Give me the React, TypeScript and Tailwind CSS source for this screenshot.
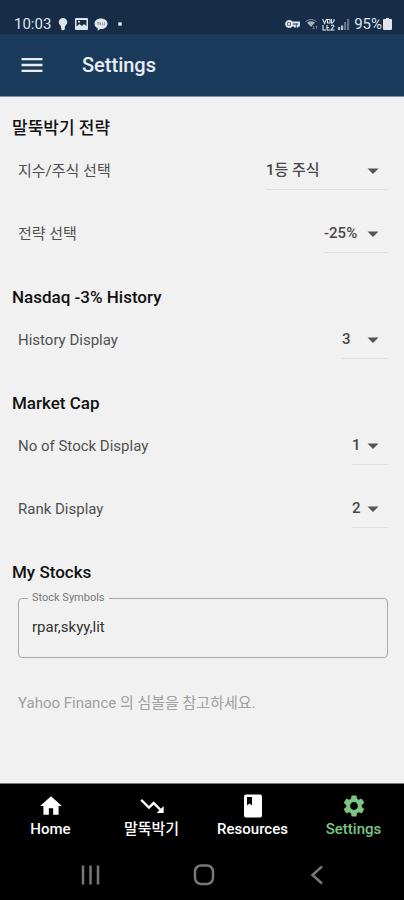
import React, { useState } from "react";
import { MdHome, MdMenu, MdSettings, MdTrendingDown } from "react-icons/md";

type SettingProps = {
  id: string;
  label: string;
  options: string[];
  initial: string;
  width: string;
};

const sections: { title: string; rows: SettingProps[] }[] = [
  {
    title: "말뚝박기 전략",
    rows: [
      {
        id: "target",
        label: "지수/주식 선택",
        options: ["1등 주식"],
        initial: "1등 주식",
        width: "w-[122px]",
      },
      {
        id: "strategy",
        label: "전략 선택",
        options: ["-25%"],
        initial: "-25%",
        width: "w-16",
      },
    ],
  },
  {
    title: "Nasdaq -3% History",
    rows: [
      {
        id: "history",
        label: "History Display",
        options: ["1", "2", "3"],
        initial: "3",
        width: "w-[46px]",
      },
    ],
  },
  {
    title: "Market Cap",
    rows: [
      {
        id: "stocks",
        label: "No of Stock Display",
        options: ["1", "2", "3"],
        initial: "1",
        width: "w-9",
      },
      {
        id: "rank",
        label: "Rank Display",
        options: ["1", "2", "3"],
        initial: "2",
        width: "w-9",
      },
    ],
  },
];

const BookIcon = () => (
  <svg viewBox="0 0 24 24" className="size-6" fill="currentColor">
    <path
      fillRule="evenodd"
      d="M5 0.5h14a2 2 0 0 1 2 2v19a2 2 0 0 1-2 2H5a2 2 0 0 1-2-2v-19a2 2 0 0 1 2-2zM6 3v8.5l2.5-2 2.5 2V3z"
    />
  </svg>
);

const tabs = [
  { name: "Home", icon: <MdHome size={26} />, active: false },
  { name: "말뚝박기", icon: <MdTrendingDown size={28} />, active: false },
  { name: "Resources", icon: <BookIcon />, active: false },
  { name: "Settings", icon: <MdSettings size={26} />, active: true },
];

const StatusBar = () => (
  <div className="flex h-[34px] items-end justify-between bg-[#162c47] px-3 pb-[2px] text-[#dfe5ec]">
    <div className="flex items-center">
      <span className="w-[38px] pl-[2px] text-[15px] leading-4">10:03</span>
      <svg viewBox="0 0 10 14" className="ml-2 h-[14px] w-[10px]" fill="currentColor">
        <path d="M5 1a4.300 4.300 0 0 1 4.300 4.300C9.300 7.300 7 8.500 6.800 10.500V12a1.800 1.300 0 0 1-3.600 0v-1.500C3 8.500.7 7.300.7 5.300A4.300 4.300 0 0 1 5 1z" />
      </svg>
      <svg viewBox="0 0 13 12" className="ml-[7px] h-3 w-[13px]" fill="currentColor">
        <path
          fillRule="evenodd"
          d="M1 0h11a1 1 0 0 1 1 1v10a1 1 0 0 1-1 1H1a1 1 0 0 1-1-1V1a1 1 0 0 1 1-1zM1.500 2v6.500L4.500 6l2.500 2 2-2L11.500 8V2z"
        />
        <circle cx="4" cy="3.800" r="1" />
      </svg>
      <svg viewBox="0 0 14 13" className="ml-[6px] h-[13px] w-[14px]">
        <path
          fill="currentColor"
          d="M7 0.500c3.700 0 6.500 2.200 6.500 5.200S10.700 11 7 11h-.6L3.500 12.800 3.800 10.200C1.800 9.300.5 7.700.5 5.700.5 2.700 3.300.5 7 .5z"
        />
        <path d="M3 4.500h2M4 4.500V7M6 7V4.500L7 7M8.500 4.500V7h1M10.500 4.500V7" stroke="#7c8999" strokeWidth=".8" fill="none" />
      </svg>
      <span className="ml-[10px] size-1 rounded-full bg-current" />
    </div>
    <div className="flex items-center">
      <svg viewBox="0 0 15 10" className="h-[10px] w-[15px]" fill="none" stroke="currentColor" strokeWidth="1.800">
        <circle cx="4" cy="5" r="3" />
        <path d="M6.500 3.500h7.500V6.500h-1.500v2M7 6.500h3v2" />
        <circle cx="4" cy="5" r=".6" />
      </svg>
      <svg viewBox="0 0 13 12" className="ml-[5px] h-3 w-[13px]">
        <path d="M0.500 3.500Q6 -.5 11.500 3.500" stroke="#7d8da0" fill="none" />
        <path d="M2 4.500Q6 2 10 4.500L6 9z" fill="#a4b0be" />
        <path d="M8.500 8v3M7.500 10l1 1 1-1M11.500 11V8M10.500 9l1-1 1 1" stroke="#7d8da0" strokeWidth=".8" fill="none" />
      </svg>
      <svg viewBox="0 0 13 13" className="ml-1 h-[13px] w-[13px]" fill="none" stroke="currentColor" strokeWidth="1.100">
        <path d="M.6 1l2 4.500L4.600 1M5.500 1.500h2.500v3.500H5.500zM9.500 1v4.500M12 1v2L10 5.500M1 7v5h3M5 7v5h3M5 9.500h2M9 8q1.500-2 3 0L9 12h3.500" />
      </svg>
      <svg viewBox="0 0 12 12" className="ml-[3px] size-3">
        <path d="M0 12V9h2.200v3zM3 12V7.500h2.200V12z" fill="#b7c1cc" />
        <path d="M6 12V4h2.200v8zM9 12V1h2.200v11z" fill="#60738a" />
      </svg>
      <span className="ml-[4px] text-[15px] leading-4">95%</span>
      <svg viewBox="0 0 9 12" className="ml-[1px] h-3 w-[9px]" fill="currentColor">
        <path d="M3 0h3v1h2a1 1 0 0 1 1 1v9a1 1 0 0 1-1 1H1a1 1 0 0 1-1-1V2a1 1 0 0 1 1-1h2z" />
      </svg>
    </div>
  </div>
);

const SettingRow = ({ id, label, options, initial, width }: SettingProps) => {
  const [value, setValue] = useState(initial);
  return (
    <div className="flex h-[42px] items-center justify-between pr-4 pl-[18px] text-[15px] text-[#505050]">
      <label htmlFor={id}>{label}</label>
      <div className={`relative ${width}`}>
        <select
          id={id}
          value={value}
          onChange={(e) => setValue(e.target.value)}
          className="block h-[38px] w-full appearance-none border-b border-[#dfdfdf] bg-transparent font-medium text-[#484848]"
        >
          {options.map((option) => (
            <option key={option}>{option}</option>
          ))}
        </select>
        <svg
          viewBox="0 0 24 24"
          className="pointer-events-none absolute top-[7px] right-[3px] size-6"
          fill="#555"
        >
          <path d="M6.500 9.500h11L12 15z" />
        </svg>
      </div>
    </div>
  );
};

const SectionTitle = ({ children }: { children: React.ReactNode }) => (
  <h2 className="flex h-[42px] items-center px-3 text-[17px] font-medium text-[#111]">
    {children}
  </h2>
);

const App = () => {
  const [symbols, setSymbols] = useState("rpar,skyy,lit");

  return (
    <div className="flex min-h-screen flex-col bg-[#f1f1f1] font-[Roboto,'Noto_Sans_CJK_KR',sans-serif]">
      <StatusBar />
      <header className="flex h-[63px] items-center border-b border-[#7f8fa3] bg-[#1a3a5b] px-[18px] text-[#e9edf2]">
        <button aria-label="Menu">
          <MdMenu size={28} />
        </button>
        <h1 className="ml-9 text-xl font-medium">Settings</h1>
      </header>

      <main className="flex flex-1 flex-col gap-[22px] pt-[11px] pb-8">
        {sections.map((section) => (
          <section key={section.title}>
            <SectionTitle>{section.title}</SectionTitle>
            <div className="flex flex-col gap-[21px]">
              {section.rows.map((row) => (
                <SettingRow key={row.id} {...row} />
              ))}
            </div>
          </section>
        ))}
        <section>
          <SectionTitle>My Stocks</SectionTitle>
          <fieldset className="-mt-0.5 mr-4 ml-[18px] h-[66px] rounded border border-[#aaa] px-[9px]">
            <legend className="px-1 text-[11px] leading-3 text-[#777]">
              <label htmlFor="symbols">Stock Symbols</label>
            </legend>
            <input
              id="symbols"
              value={symbols}
              onChange={(e) => setSymbols(e.target.value)}
              className="h-[46px] w-full bg-transparent px-1 text-[15px] text-[#333] outline-none"
            />
          </fieldset>
          <p className="mt-[34px] px-[18px] text-[15px] text-[#a0a0a0]">
            Yahoo Finance 의 심볼을 참고하세요.
          </p>
        </section>
      </main>

      <footer className="border-t border-[#777] bg-black">
        <nav className="grid h-[66px] grid-cols-4 pt-2">
          {tabs.map((tab) => (
            <a
              key={tab.name}
              href="#"
              className={`flex flex-col items-center text-[15px] font-medium ${
                tab.active ? "text-[#7cc584]" : "text-white"
              }`}
            >
              <span className="flex h-7 items-center">{tab.icon}</span>
              <span className="leading-[18px]">{tab.name}</span>
            </a>
          ))}
        </nav>
        <div className="flex h-[50px] items-center justify-center gap-[89px] pl-1 text-[#777]">
          <button aria-label="Recent apps">
            <svg viewBox="0 0 24 24" className="size-6" stroke="currentColor" strokeWidth="2.500">
              <path d="M4 2.500v19M11.500 2.500v19M19 2.500v19" />
            </svg>
          </button>
          <button aria-label="Home screen">
            <svg viewBox="0 0 24 24" className="size-6" fill="none" stroke="currentColor" strokeWidth="2.500">
              <rect x="3" y="2.500" width="18" height="18.500" rx="6" />
            </svg>
          </button>
          <button aria-label="Back">
            <svg viewBox="0 0 24 24" className="size-6" fill="none" stroke="currentColor" strokeWidth="2.500">
              <path d="M17 3.500L7.500 12l9.500 8.500" />
            </svg>
          </button>
        </div>
      </footer>
    </div>
  );
};

export default App;
